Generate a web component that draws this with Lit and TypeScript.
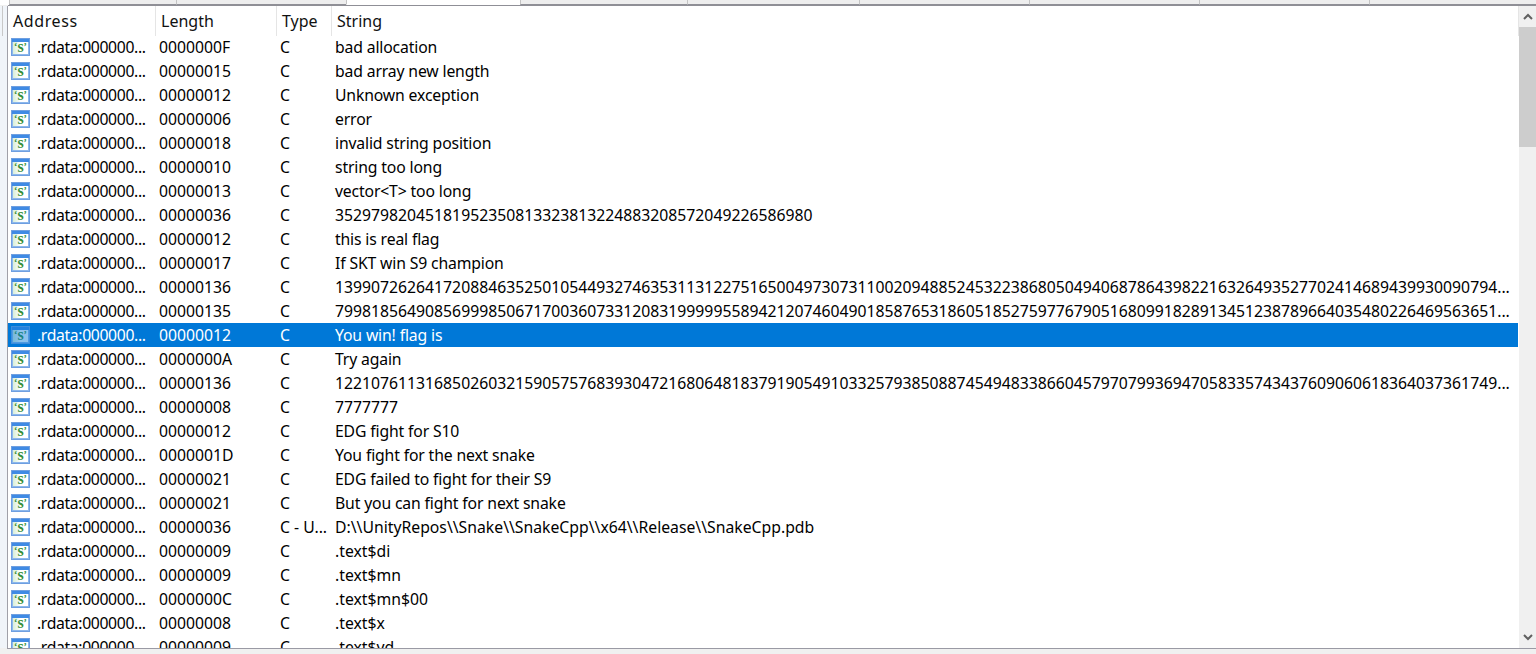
import { LitElement, html, css, svg } from "lit";
import { customElement } from "lit/decorators.js";

const rows: [string, string, string, boolean?][] = [
  ["0000000F", "C", "bad allocation"],
  ["00000015", "C", "bad array new length"],
  ["00000012", "C", "Unknown exception"],
  ["00000006", "C", "error"],
  ["00000018", "C", "invalid string position"],
  ["00000010", "C", "string too long"],
  ["00000013", "C", "vector<T> too long"],
  ["00000036", "C", "35297982045181952350813323813224883208572049226586980"],
  ["00000012", "C", "this is real flag"],
  ["00000017", "C", "If SKT win S9 champion"],
  ["00000136", "C", "139907262641720884635250105449327463531131227516500497307311002094885245322386805049406878643982216326493527702414689439930090794..."],
  ["00000135", "C", "799818564908569998506717003607331208319999955894212074604901858765318605185275977679051680991828913451238789664035480226469563651..."],
  ["00000012", "C", "You win! flag is", true],
  ["0000000A", "C", "Try again"],
  ["00000136", "C", "122107611316850260321590575768393047216806481837919054910332579385088745494833866045797079936947058335743437609060618364037361749..."],
  ["00000008", "C", "7777777"],
  ["00000012", "C", "EDG fight for S10"],
  ["0000001D", "C", "You fight for the next snake"],
  ["00000021", "C", "EDG failed to fight for their S9"],
  ["00000021", "C", "But you can fight for next snake"],
  ["00000036", "C - U...", "D:\\\\UnityRepos\\\\Snake\\\\SnakeCpp\\\\x64\\\\Release\\\\SnakeCpp.pdb"],
  ["00000009", "C", ".text$di"],
  ["00000009", "C", ".text$mn"],
  ["0000000C", "C", ".text$mn$00"],
  ["00000008", "C", ".text$x"],
  ["00000009", "C", ".text$yd"],
];

const tabs = [167, 170, 174, 167, 172, 170, 170, 170];

const isProse = (s: string) => /^[A-Za-z]/.test(s) && !s.startsWith("D:");

const icon = svg`<svg class="ico" viewBox="0 0 19 18" width="19" height="18">
  <defs><linearGradient id="bg" x1="0" y1="0" x2="1" y2="0"><stop offset="0" stop-color="#d8efd8"/><stop offset=".5" stop-color="#fff"/></linearGradient></defs>
  <rect x="0.5" y="0.5" width="18" height="17" fill="#8db8ec" stroke="#6f9fe0"/>
  <rect x="1" y="1" width="17" height="3" fill="#3f8ae4"/>
  <rect x="2" y="4" width="15" height="12" fill="url(#bg)"/>
  <text x="9.5" y="14" text-anchor="middle" class="glyph"><tspan class="q" dy="-2">‘</tspan><tspan dy="2">s</tspan><tspan class="q" dy="-2">’</tspan></text>
</svg>`;

@customElement("app-root")
export class AppRoot extends LitElement {
  static styles = css`
    :host { display: block; width: 1536px; height: 654px; overflow: hidden; background: #f0f0f0;
      font-family: "Noto Sans", "Open Sans", sans-serif; font-size: 15.75px; color: #000; }
    .tabs { display: flex; height: 5px; padding-left: 9px; background: #fff; }
    .tab { background: #eeeeee; border-left: 1px solid #c4c4c4; border-bottom: 1px solid #8f8f96; box-sizing: border-box; height: 5px; flex: none; }
    .tab.active { background: #fff; border-bottom-color: transparent; }
    .tab.rest { flex: 1; }
    .rule { height: 1px; background: #8f8f96; margin-left: 8px; }
    .body { display: flex; height: 642px; background: #f0f4f9; }
    .strip { width: 7px; flex: none; background: #f0f4f9; }
    .strip i { display: block; width: 2px; height: 30px; border-right: 1px solid #c8c8c8; }
    .panel { flex: 1; display: flex; min-width: 0; border-left: 1px solid #a0a0a8; background: #fff; }
    .list { flex: 1; min-width: 0; overflow: hidden; }
    .head { display: grid; grid-template-columns: 148px 121px 55px 1fr; height: 29px; align-items: stretch; }
    .head div { padding-left: 5px; line-height: 30px; border-right: 1px solid #e5e5e5; font-size: 16px; color: #111; }
    .head .addr-h { letter-spacing: .6px; }
    .row { display: grid; grid-template-columns: 148px 122px 56px 1fr; height: 24px; align-items: center; white-space: pre; margin-right: 1px; }
    .row.sel { background: #0078d7; color: #fff; }
    .row.sel .ico { opacity: .55; }
    .addr { display: flex; align-items: center; gap: 7px; padding-left: 3px; letter-spacing: -.36px; }
    .ico { flex: none; }
    .glyph { font-family: "Liberation Serif", serif; font-weight: 700; font-size: 16px; fill: #35903a; letter-spacing: 0; }
    .glyph .q { font-size: 10px; }
    .len { padding-left: 3px; }
    .type { padding-left: 2px; }
    .str { overflow: hidden; padding-left: 1px; }
    .str.prose { letter-spacing: -.15px; }
    .sb { width: 17px; flex: none; background: #f0f0f0; display: flex; flex-direction: column; }
    .sb .btn { height: 21px; display: flex; align-items: center; justify-content: center; flex: none; }
    .sb .thumb { height: 120px; background: #cdcdcd; flex: none; }
    .sb .track { flex: 1; }
    .bottom { height: 1px; background: #9a9aa4; margin-left: 7px; }
    .foot { height: 5px; background: #f0f0f0; }
  `;

  render() {
    return html`
      <div class="tabs">
        ${tabs.map((w, i) => html`<div class="tab ${i === 2 ? "active" : ""}" style="width:${w}px"></div>`)}
        <div class="tab rest"></div>
      </div>
      <div class="rule"></div>
      <div class="body">
        <div class="strip"><i></i></div>
        <div class="panel">
          <div class="list">
            <div class="head">
              <div class="addr-h">Address</div><div>Length</div><div>Type</div><div>String</div>
            </div>
            ${rows.map(([len, type, str, sel]) => html`
              <div class="row ${sel ? "sel" : ""}">
                <div class="addr">${icon}<span>.rdata:000000...</span></div>
                <div class="len">${len}</div>
                <div class="type">${type}</div>
                <div class="str ${isProse(str) ? "prose" : ""}">${str}</div>
              </div>`)}
          </div>
          <div class="sb">
            <div class="btn"><svg width="10" height="7" viewBox="0 0 10 7"><path d="M1 6 L5 2 L9 6" fill="none" stroke="#606060" stroke-width="2"/></svg></div>
            <div class="thumb"></div>
            <div class="track"></div>
            <div class="btn"><svg width="10" height="7" viewBox="0 0 10 7"><path d="M1 1 L5 5 L9 1" fill="none" stroke="#606060" stroke-width="2"/></svg></div>
          </div>
        </div>
      </div>
      <div class="bottom"></div>
      <div class="foot"></div>
    `;
  }
}
